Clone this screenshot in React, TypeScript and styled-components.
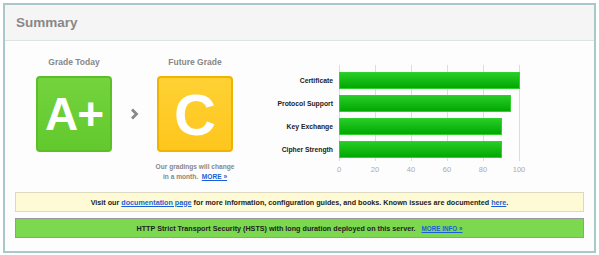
import React from "react";
import styled, { createGlobalStyle } from "styled-components";

const Global = createGlobalStyle`
  html, body { margin: 0; padding: 0; background: #ffffff; }
  body { font-family: "Liberation Sans", Arial, sans-serif; }
`;

const Frame = styled.div`
  margin: 3px;
  width: 589px;
  height: 246px;
  border: 2px solid #a8c8ca;
  background: #fdfdfd;
  display: flex;
  flex-direction: column;
`;

const Header = styled.div`
  height: 35px;
  background: #f5f5f5;
  border-bottom: 1px solid #dde4e4;
  display: flex;
  align-items: center;
  padding-left: 11px;
  flex-shrink: 0;
`;

const Title = styled.h2`
  margin: 0;
  font-size: 13.5px;
  font-weight: bold;
  color: #888888;
`;

const Body = styled.div`
  display: flex;
  flex-direction: column;
  padding: 0 10px;
`;

const Top = styled.div`
  display: flex;
  height: 151px;
`;

const Grades = styled.div`
  display: flex;
  align-items: flex-start;
  padding-left: 21px;
  padding-top: 16px;
`;

const GradeCol = styled.div`
  width: 76px;
  display: flex;
  flex-direction: column;
  align-items: center;
`;

const GradeLabel = styled.div`
  font-size: 8.5px;
  font-weight: bold;
  color: #888888;
  white-space: nowrap;
  height: 19px;
`;

const GradeBox = styled.div<{ $tone: "green" | "yellow" }>`
  width: 76px;
  height: 76px;
  box-sizing: border-box;
  border-radius: 4px;
  border: 2px solid ${(p) => (p.$tone === "green" ? "#5cbf2a" : "#f0b400")};
  background: ${(p) =>
    p.$tone === "green"
      ? "linear-gradient(#74d33e, #62c92d)"
      : "linear-gradient(#ffd134, #fec61d)"};
  display: flex;
  align-items: center;
  justify-content: center;
  color: #ffffff;
  font-weight: bold;
  font-size: ${(p) => (p.$tone === "green" ? "46px" : "58px")};
  letter-spacing: ${(p) => (p.$tone === "green" ? "-1px" : "0")};
`;

const Arrow = styled.div`
  width: 45px;
  height: 76px;
  margin-top: 19px;
  display: flex;
  align-items: center;
  justify-content: center;
`;

const Note = styled.div`
  margin-top: 10px;
  font-size: 6.6px;
  font-weight: bold;
  color: #888888;
  text-align: center;
  line-height: 10px;
  white-space: nowrap;
`;

const Link = styled.a`
  color: #1a5fd6;
  text-decoration: underline;
`;

const Chart = styled.div`
  margin-left: 24px;
  padding-top: 24px;
  display: flex;
`;

const Labels = styled.div`
  display: flex;
  flex-direction: column;
  align-items: flex-end;
  padding-top: 7px;
  width: 76px;
  margin-right: 6px;
`;

const Label = styled.div`
  height: 23px;
  line-height: 17px;
  font-size: 6.8px;
  font-weight: bold;
  color: #222222;
  white-space: nowrap;
`;

const Plot = styled.div`
  position: relative;
  width: 181px;
  height: 96px;
`;

const Grid = styled.div`
  position: absolute;
  top: 0;
  bottom: 0;
  width: 1px;
  background: #dddddd;
`;

const Bars = styled.div`
  position: relative;
  padding-top: 7px;
  display: flex;
  flex-direction: column;
  gap: 6px;
`;

const Bar = styled.div`
  height: 17px;
  box-sizing: border-box;
  border: 1px solid #2fd02f;
  background: linear-gradient(#27cc27, #02a802);
`;

const Ticks = styled.div`
  position: relative;
  height: 14px;
`;

const Tick = styled.div`
  position: absolute;
  top: 4px;
  transform: translateX(-50%);
  font-size: 7.5px;
  color: #aaaaaa;
`;

const Notice = styled.div<{ $tone: "info" | "ok" }>`
  height: 20px;
  box-sizing: border-box;
  border: 1px solid ${(p) => (p.$tone === "info" ? "#dcd9c0" : "#999999")};
  background: ${(p) => (p.$tone === "info" ? "#fffad6" : "#7cd84e")};
  display: flex;
  align-items: center;
  justify-content: center;
  font-size: 7.2px;
  font-weight: bold;
  color: #222222;
  white-space: pre;
  margin-top: ${(p) => (p.$tone === "info" ? "0" : "6px")};
`;

const MoreInfo = styled.a`
  color: #1a5fd6;
  text-decoration: underline;
  font-size: 6.3px;
  margin-left: 6px;
`;

const bars = [
  { name: "Certificate", v: 100 },
  { name: "Protocol Support", v: 95 },
  { name: "Key Exchange", v: 90 },
  { name: "Cipher Strength", v: 90 },
];

export default function App() {
  const ticks = [0, 20, 40, 60, 80, 100];
  return (
    <>
      <Global />
      <Frame>
        <Header>
          <Title>Summary</Title>
        </Header>
        <Body>
          <Top>
            <Grades>
              <GradeCol>
                <GradeLabel>Grade Today</GradeLabel>
                <GradeBox $tone="green">A+</GradeBox>
              </GradeCol>
              <Arrow>
                <svg width="9" height="12" viewBox="0 0 9 12">
                  <path d="M2 1.5 L6.5 6 L2 10.5" stroke="#888" strokeWidth="2.8" fill="none" />
                </svg>
              </Arrow>
              <GradeCol>
                <GradeLabel>Future Grade</GradeLabel>
                <GradeBox $tone="yellow">C</GradeBox>
                <Note>
                  Our gradings will change
                  <br />
                  in a month.&nbsp; <Link href="#">MORE »</Link>
                </Note>
              </GradeCol>
            </Grades>
            <Chart>
              <Labels>
                {bars.map((b) => (
                  <Label key={b.name}>{b.name}</Label>
                ))}
              </Labels>
              <div>
                <Plot>
                  {ticks.map((t) => (
                    <Grid key={t} style={{ left: t * 1.8 }} />
                  ))}
                  <Bars>
                    {bars.map((b) => (
                      <Bar key={b.name} style={{ width: b.v * 1.8 + 1 }} />
                    ))}
                  </Bars>
                </Plot>
                <Ticks>
                  {ticks.map((t) => (
                    <Tick key={t} style={{ left: t * 1.8 }}>
                      {t}
                    </Tick>
                  ))}
                </Ticks>
              </div>
            </Chart>
          </Top>
          <Notice $tone="info">
            Visit our <Link href="#">documentation page</Link> for more information, configuration guides, and books. Known issues are documented <Link href="#">here</Link>.
          </Notice>
          <Notice $tone="ok">
            HTTP Strict Transport Security (HSTS) with long duration deployed on this server.<MoreInfo href="#">MORE INFO »</MoreInfo>
          </Notice>
        </Body>
      </Frame>
    </>
  );
}
